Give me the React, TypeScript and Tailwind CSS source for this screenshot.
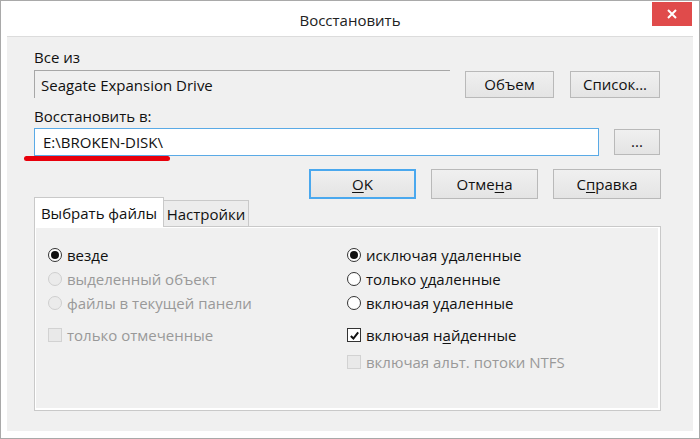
import React from "react"

const font = { fontFamily: '"Open Sans", "Noto Sans", sans-serif' }

function Btn({
  children,
  className = "",
  focused = false,
}: {
  children: React.ReactNode
  className?: string
  focused?: boolean
}) {
  return (
    <div
      className={`flex items-center justify-center bg-gradient-to-b from-[#f0f0f0] to-[#e4e4e4] text-[15px] text-[#111] ${
        focused
          ? "border-2 border-[#4aa8ee]"
          : "border border-[#b9b9b9]"
      } ${className}`}
    >
      {children}
    </div>
  )
}

function Radio({
  checked = false,
  disabled = false,
  children,
}: {
  checked?: boolean
  disabled?: boolean
  children: React.ReactNode
}) {
  return (
    <div className="flex h-[24px] items-center gap-[5px]">
      <span
        className={`flex h-[14px] w-[14px] items-center justify-center rounded-full border ${
          disabled
            ? "border-[#cfcfcf] bg-[#ebebeb]"
            : "border-[#333] bg-white"
        }`}
      >
        {checked && <span className="h-[8px] w-[8px] rounded-full bg-[#111]" />}
      </span>
      <span className={disabled ? "text-[#999]" : "text-[#111]"}>{children}</span>
    </div>
  )
}

function Check({
  checked = false,
  disabled = false,
  children,
}: {
  checked?: boolean
  disabled?: boolean
  children: React.ReactNode
}) {
  return (
    <div className="flex h-[24px] items-center gap-[5px]">
      <span
        className={`flex h-[14px] w-[14px] items-center justify-center border ${
          disabled
            ? "border-[#d2d2d2] bg-[#e9e9e9]"
            : "border-[#333] bg-white"
        }`}
      >
        {checked && (
          <svg viewBox="0 0 12 12" className="h-[11px] w-[11px]">
            <path d="M2 6.5 L4.8 9.3 L10 2.5" fill="none" stroke="#111" strokeWidth="2.2" />
          </svg>
        )}
      </span>
      <span className={disabled ? "text-[#999]" : "text-[#111]"}>{children}</span>
    </div>
  )
}

export default function App() {
  return (
    <div
      style={font}
      className="flex h-[439px] w-[700px] flex-col border border-[#a9a9a9] bg-white text-[15px] leading-[20px]"
    >
      {/* Title bar */}
      <div className="relative flex h-[35px] items-center justify-center text-[15px] text-[#222]">
        <span className="mt-[3px]">Восстановить</span>
        <div className="absolute right-[7px] top-[1px] flex h-[24px] w-[40px] items-center justify-center bg-[#e04b4b]">
          <svg viewBox="0 0 10 10" className="h-[10px] w-[10px]">
            <path d="M1 1 L9 9 M9 1 L1 9" stroke="white" strokeWidth="2" />
          </svg>
        </div>
      </div>

      {/* Client area */}
      <div className="relative mx-[6px] mb-[7px] flex flex-1 flex-col border-t border-[#dcdcdc] bg-[#f0f0f0] pl-[27px] pr-[32px] pt-[10px]">
        <div className="text-[#111]">Все из</div>
        <div className="mt-[3px] flex h-[28px] items-center">
          <div className="flex h-[28px] w-[416px] items-center border-l border-t border-[#a7a7a7] pl-[6px] text-[#111]">
            Seagate Expansion Drive
          </div>
          <Btn className="ml-[15px] h-[27px] w-[89px]">Объем</Btn>
          <Btn className="ml-[16px] h-[27px] w-[90px]">Список...</Btn>
        </div>

        <div className="mt-[8px] text-[#111]">Восстановить в:</div>
        <div className="mt-[2px] flex h-[28px] items-center">
          <div className="flex h-[28px] w-[565px] items-center border border-[#5aaae6] bg-white pl-[8px] text-[#111]">
            E:\BROKEN-DISK\
          </div>
          <Btn className="ml-[15px] h-[26px] w-[46px]">
            <span className="-mt-[2px]">...</span>
          </Btn>
        </div>

        {/* Red marker underline */}
        <div className="absolute left-[17px] top-[119px] h-[5px] w-[146px] rounded-full bg-[#e8000b]" />

        <div className="mt-[13px] flex justify-end gap-[15px]">
          <Btn focused className="h-[30px] w-[107px]">
            <span className="underline underline-offset-2">O</span>K
          </Btn>
          <Btn className="h-[30px] w-[107px]">
            Отме<span className="underline underline-offset-2">н</span>а
          </Btn>
          <Btn className="h-[30px] w-[108px]">
            С<span className="underline underline-offset-2">п</span>равка
          </Btn>
        </div>

        {/* Tabs */}
        <div className="-mt-[2px] flex items-end">
          <div className="relative z-10 -mb-px flex h-[30px] w-[130px] items-center justify-center border border-b-0 border-[#c9c9c9] bg-white text-[#111]">
            Выбрать файлы
          </div>
          <div className="flex h-[26px] w-[85px] items-center justify-center border border-l-0 border-b-0 border-[#c9c9c9] bg-[#ececec] text-[#111]">
            Настройки
          </div>
        </div>
        <div className="flex h-[185px] w-[627px] border border-[#c9c9c9] bg-[#f0f0f0] shadow-[inset_1px_1px_0_#fff,inset_-2px_-2px_0_#fff]">
          <div className="w-[312px] pl-[13px] pt-[16px]">
            <Radio checked>везде</Radio>
            <Radio disabled>выделенный объект</Radio>
            <Radio disabled>файлы в текущей панели</Radio>
            <div className="mt-[8px]">
              <Check disabled>только отмеченные</Check>
            </div>
          </div>
          <div className="pt-[16px]">
            <Radio checked>исключая удаленные</Radio>
            <Radio>
              только <span className="underline underline-offset-2">у</span>даленные
            </Radio>
            <Radio>включая удаленные</Radio>
            <div className="mt-[8px]">
              <Check checked>
                включая н<span className="underline underline-offset-2">а</span>йденные
              </Check>
            </div>
            <div className="mt-[3px]">
              <Check disabled>включая альт. потоки NTFS</Check>
            </div>
          </div>
        </div>
      </div>
    </div>
  )
}
